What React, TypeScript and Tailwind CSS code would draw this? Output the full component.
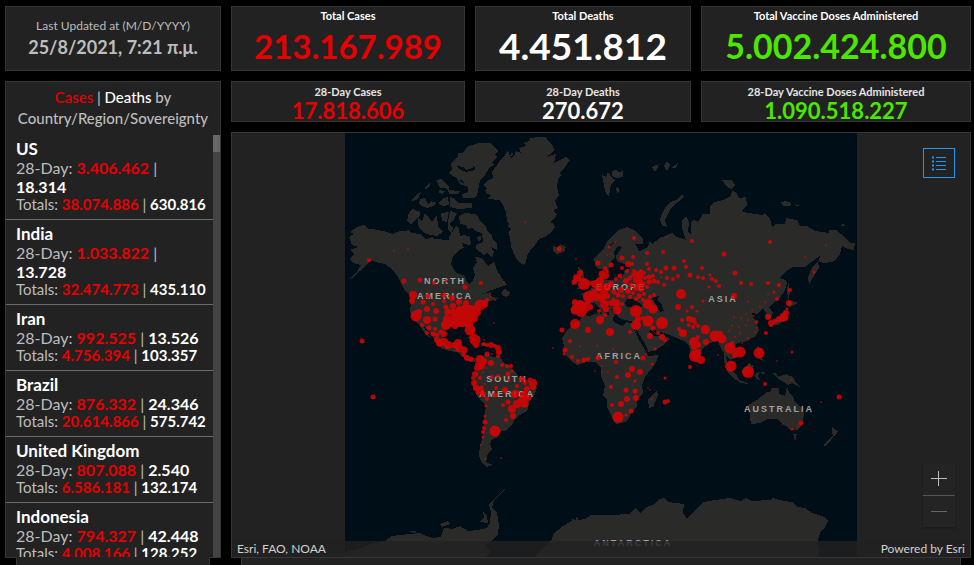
import React from "react";

interface CountryProps {
  name: string;
  cases: string;
  deaths: string;
  totalCases: string;
  totalDeaths: string;
}

const countries: CountryProps[] = [
  { name: "US", cases: "3.406.462", deaths: "18.314", totalCases: "38.074.886", totalDeaths: "630.816" },
  { name: "India", cases: "1.033.822", deaths: "13.728", totalCases: "32.474.773", totalDeaths: "435.110" },
  { name: "Iran", cases: "992.525", deaths: "13.526", totalCases: "4.756.394", totalDeaths: "103.357" },
  { name: "Brazil", cases: "876.332", deaths: "24.346", totalCases: "20.614.866", totalDeaths: "575.742" },
  { name: "United Kingdom", cases: "807.088", deaths: "2.540", totalCases: "6.586.181", totalDeaths: "132.174" },
  { name: "Indonesia", cases: "794.327", deaths: "42.448", totalCases: "4.008.166", totalDeaths: "128.252" },
];

// Web mercator outlines
const land = [
  // Greenland
  "499,162 505,155 508,150 510,156 512,152 514,156 516,151 521,153 519,148 526,146 523,143 530,141 528,139 537,137 546,137 549,142 553,145 554,150 552,153 546,157 556,154 554,163 560,160 566,157 570,160 565,167 560,172 561,175 558,180 557,187 559,195 555,201 558,208 553,211 557,214 555,218 550,222 554,224 555,227 552,232 545,237 540,238 535,245 530,251 527,256 526,262 524,265 520,263 516,258 511,247 510,237 508,232 512,229 508,227 509,224 507,222 506,212 503,205 500,200 488,199 491,195 487,194 485,190 487,188 483,185 487,181 493,178 492,172 497,165",
  // Ellesmere
  "449,172 452,170 451,164 453,161 458,157 458,153 463,153 467,147 478,143 490,143 499,151 495,154 497,157 492,162 494,165 489,168 485,175 480,180 479,186 477,195 474,198 463,198 462,194 468,192 468,187 460,184 456,177 452,176",
  // Baffin
  "459,216 465,213 475,214 478,217 480,221 486,227 488,232 492,236 493,240 497,244 497,250 491,247 494,252 492,257 487,253 484,255 476,249 476,245 483,242 482,233 475,231 472,228 468,229 466,225 460,224",
  "477,237 481,236 481,240 478,241",
  // Arctic islands
  "418,218 422,221 425,213 429,218 432,222 437,215 438,227 443,232 437,236 430,235 423,232 420,229 418,225",
  "409,212 413,209 420,212 420,215 416,219 411,224 407,221",
  "420,199 425,198 428,204 431,201 436,203 433,206 427,208 422,206 419,204",
  "411,200 416,195 421,192 418,199 413,201",
  "441,213 449,212 447,222 442,221",
  "450,211 457,213 454,219 449,224 453,227 452,233 448,230 448,222",
  "450,197 455,199 458,203 472,203 472,208 458,209 450,207",
  "443,198 448,197 449,205 443,206 438,203",
  "436,180 441,179 449,187 450,193 446,188 440,188",
  "425,187 430,183 430,185 426,190", "439,190 445,191 443,194 439,193", "448,190 460,191 458,194 449,194",
  // North America
  "349,237 354,234 350,232 357,227 364,225 368,229 372,229 383,231 393,234 400,231 406,231 408,229 411,233 420,234 426,239 432,237 434,239 449,240 449,237 453,231 456,226 459,229 460,236 464,235 470,237 471,244 463,248 458,251 453,256 451,264 456,273 465,276 466,280 469,284 473,281 475,274 473,268 477,262 475,257 482,258 488,266 494,262 497,270 503,280 507,285 500,287 494,289 482,294 491,292 491,297 499,298 488,302 482,305 477,314 473,318 472,323 475,330 474,335 471,333 468,327 462,327 455,326 448,328 443,334 444,343 449,347 455,343 460,341 458,348 464,351 466,359 475,358 481,359 479,362 470,362 463,357 457,352 449,351 441,348 436,342 432,335 424,327 428,334 431,338 426,335 420,326 415,321 410,312 411,303 410,296 404,289 398,277 393,270 385,264 372,261 368,263 360,271 352,278 349,279 358,270 361,265 353,263 350,258 355,254 350,250 358,247 352,245",
  "501,292 505,289 510,292 509,296 503,296",
  // Caribbean
  "466,337 471,336 478,341 473,340", "481,343 488,344 486,346 481,346",
  // South America
  "480,357 488,354 493,357 500,357 504,363 509,366 517,374 520,379 526,380 533,382 537,388 535,394 529,402 528,410 520,415 516,418 513,423 506,431 501,431 498,437 492,439 490,444 492,449 488,453 487,458 486,462 493,465 486,467 481,462 479,455 480,445 483,437 484,420 486,405 478,398 473,387 474,378 479,368",
  // Africa
  "581,318 583,315 590,316 598,313 606,315 613,315 613,321 618,324 623,326 626,322 637,325 634,330 640,341 645,350 648,356 659,355 655,364 645,377 642,385 643,393 637,400 637,407 631,412 629,419 625,422 617,424 614,422 611,415 607,407 607,400 603,396 605,386 601,376 601,368 596,362 587,362 577,365 570,360 563,352 564,346 562,338 567,330 572,325 578,321",
  "657,390 658,395 653,407 649,408 648,400 652,395",
  // Scandinavia
  "595,266 594,258 600,253 604,248 607,242 612,236 618,230 627,227 634,230 643,238 643,244 635,244 640,252 636,264 624,264 617,261 616,256 622,247 618,246 614,252 615,257 612,260 608,272 604,268 599,269",
  // Eurasia
  "573,301 580,301 586,302 584,296 580,294 587,292 592,288 597,284 600,280 600,273 604,272 606,280 615,280 622,278 625,270 631,268 627,266 632,262 634,252 638,254 640,251 648,247 650,241 652,244 660,238 672,233 677,237 686,240 682,229 682,221 686,216 689,222 688,232 691,235 691,222 694,220 698,222 702,216 702,214 710,214 710,206 715,202 723,200 731,196 732,191 736,192 739,198 746,197 747,205 741,211 748,213 762,215 765,213 770,219 772,227 775,224 785,224 786,218 797,220 800,226 807,226 815,231 829,233 829,230 836,230 845,237 850,243 855,243 854,250 848,249 842,246 840,254 835,261 825,263 818,262 819,268 812,279 809,285 808,277 812,268 819,260 820,256 810,263 805,267 793,267 786,271 779,278 786,280 787,284 784,292 778,300 773,303 769,307 773,313 771,318 767,319 766,313 763,308 757,314 752,313 754,319 759,321 757,325 759,330 756,336 747,341 738,343 734,346 738,352 735,358 730,360 726,355 727,362 731,368 733,373 729,369 724,362 724,353 721,348 718,341 710,343 702,349 699,360 696,363 692,358 689,346 684,341 672,336 663,333 655,330 652,329 656,334 661,335 663,333 665,337 670,338 665,344 656,350 648,352 643,345 637,335 634,328 634,322 622,319 617,316 615,309 611,309 615,316 611,318 607,309 600,300 597,299 604,308 608,311 603,316 600,309 594,303 588,304 586,308 582,313 576,314 571,311",
  // British isles, Iceland, Svalbard
  "578,267 583,270 584,278 590,284 588,288 577,289 581,283 577,279 580,274", "573,280 578,278 577,284 572,285",
  "553,246 557,247 560,244 566,247 564,252 557,254 553,251",
  "602,175 606,177 608,172 612,178 615,181 611,184 610,190 609,196 606,194 604,186",
  "612,171 616,170 618,172 623,171 623,177 616,178 612,176", "616,188 618,187 620,191 617,193",
  "652,167 659,164 657,169 655,172", "664,166 667,161 670,165 667,171", "671,168 678,163 676,168",
  // Novaya Zemlya and the Siberian islands
  "682,195 684,197 678,202 671,208 668,214 665,220 667,227 662,225 660,220 662,214 665,208 670,202 676,200",
  "722,180 732,180 735,185 731,189 727,187", "781,202 786,201 791,203 791,206 783,206", "795,204 800,206 796,206", "840,226 843,224 845,226",
  // East Asian islands
  "788,282 790,290 789,301 787,292", "786,304 790,300 798,303 790,307", "785,310 788,319 778,325 770,325 780,318",
  "757,345 761,350 760,355 764,361 759,359", "742,370 749,363 754,366 751,375 744,376",
  "724,365 732,371 737,376 740,381 736,380 728,373", "737,380 743,381 749,384 741,383", "755,374 760,372 758,376 760,380 756,379",
  "760,372 768,373 762,374",
  "772,373 776,373 778,377 786,374 793,377 796,383 800,387 792,383 788,385 784,382 778,379",
  // Oceania
  "748,405 757,400 762,396 766,392 770,392 773,388 779,388 779,394 785,396 787,387 790,394 793,396 795,402 801,408 804,414 803,420 801,426 797,430 791,430 786,426 783,424 777,419 768,419 760,423 751,424 750,415",
  "793,434 797,434 795,439", "832,426 835,430 838,431 836,435 832,434", "835,434 831,440 825,446 823,445 829,439",
  // Antarctica
  "345,557 345,552 362,548 374,543 385,541 392,536 400,535 420,533 424,535 432,538 441,537 444,528 453,529 460,526 468,531 478,530 487,528 490,523 491,512 489,505 494,499 505,489 501,494 494,500 492,508 497,513 499,525 498,534 494,539 485,545 490,552 486,557",
  "483,511 487,516 488,523 480,522 484,517", "440,524 448,521 450,524 442,527", "408,531 416,531 414,533",
  "535,557 545,546 552,540 553,534 563,526 572,521 573,518 575,521 577,516 578,520 585,519 591,515 610,515 630,514 635,508 640,513 646,507 655,504 659,499 664,498 668,502 684,504 683,513 687,519 692,513 704,502 715,500 730,498 741,501 746,498 752,501 770,500 773,498 784,501 792,502 797,507 805,508 812,513 824,517 828,521 825,527 821,531 818,540 819,557",
];

const water = [
  "625,303 627,299 631,299 635,300 643,306 638,308 627,307",
  "652,298 659,296 657,300 662,305 664,311 660,312 657,306",
  "648,331 651,330 655,334 662,333 660,336 654,336",
  "635,328 638,332 645,344 648,350 645,350 638,338",
  "457,166 463,167 466,170 473,168 474,164 475,170 466,172 460,170",
  "459,181 466,174 461,180 466,184", "461,280 464,283 460,282",
  "608,246 614,242 612,245", "509,156 514,155 511,158",
  "462,243 466,244 470,247 464,248",
];

// x, y, radius
const outbreaks = [
  // Alaska, Canada, Pacific
  [369, 260, 2], [394, 251, 1], [408, 249, 1], [404, 281, 2.5], [420, 280, 2.5], [434, 283, 2], [446, 281, 1.5], [465, 287, 2.5], [481, 283, 2], [504, 282, 1], [525, 222, 1], [362, 341, 2.5], [373, 397, 2.5], [494, 323, 1], [506, 296, 1],
  // United States
  [413, 295, 4], [412, 301, 3], [428, 296, 2.5], [444, 295, 2.5], [452, 298, 3], [423, 302, 2.5], [433, 304, 2], [444, 301, 2], [459, 302, 3], [466, 303, 3], [416, 316, 5.5], [419, 312, 3], [427, 309, 3], [436, 311, 3], [427, 320, 4], [435, 319, 2.5], [429, 328, 2.5], [422, 325, 2], [435, 329, 2], [446, 307, 2.5], [453, 306, 3], [448, 312, 3.5], [454, 312, 3.5], [460, 310, 4], [466, 309, 5], [471, 310, 5], [447, 319, 4], [453, 319, 4], [459, 318, 5], [466, 317, 6], [472, 314, 6], [446, 325, 5], [455, 325, 4], [461, 323, 4], [468, 321, 6], [473, 318, 5], [450, 322, 4], [457, 314, 4], [463, 314, 5], [476, 313, 4], [470, 330, 5.5], [475, 340, 5.5], [476, 345, 3], [480, 305, 5.5], [484, 304, 4], [477, 309, 4], [487, 300, 2], [479, 313, 2], [491, 297, 1], [495, 300, 1],
  // Mexico and Central America
  [427, 333, 2], [433, 334, 2.5], [437, 335, 2], [441, 332, 2.5], [444, 334, 3], [437, 340, 3], [440, 343, 4], [444, 342, 4], [448, 345, 4], [454, 345, 3], [458, 343, 4], [459, 348, 4], [464, 350, 3.5], [467, 358, 3], [471, 359, 2.5], [464, 355, 2], [484, 344, 2], [487, 345, 2], [491, 345, 3], [495, 346, 2], [498, 348, 3], [499, 352, 3], [498, 356, 2], [484, 340, 1], [473, 336, 3], [487, 354, 2.5], [492, 354, 1],
  // South America
  [480, 359, 4], [480, 365, 5], [477, 368, 3], [484, 361, 3], [486, 368, 1], [491, 363, 3], [483, 372, 1], [475, 374, 3], [473, 378, 2], [474, 383, 3], [476, 388, 3], [480, 378, 2], [478, 393, 2], [482, 386, 1], [485, 384, 1], [502, 365, 2], [507, 366, 2], [511, 366, 2], [512, 371, 1.5], [508, 374, 2.5], [492, 377, 2], [498, 376, 2], [522, 379, 3], [525, 383, 2], [530, 380, 2.5], [533, 383, 4], [533, 387, 3], [517, 386, 2], [505, 390, 3], [496, 388, 2], [509, 380, 1.5], [518, 392, 1.5], [527, 389, 3], [515, 394, 4], [524, 395, 4], [528, 398, 3], [522, 402, 5], [517, 404, 4], [525, 404, 3.5], [512, 409, 4], [513, 416, 3], [508, 402, 2.5], [503, 405, 2], [506, 420, 2], [495, 431, 5.5], [495, 395, 2.5], [480, 390, 4], [483, 394, 3], [487, 399, 2], [486, 406, 1.5], [485, 416, 1.5], [485, 422, 2.5], [484, 428, 2], [483, 432, 2], [483, 437, 1.5], [481, 445, 1], [485, 459, 1], [501, 458, 1],
  // Western Europe
  [559, 249, 2.5], [576, 259, 1], [580, 273, 3], [577, 278, 4], [574, 282, 2.5], [584, 284, 6], [591, 283, 2], [589, 297, 6], [595, 284, 4], [600, 281, 4], [602, 274, 3.5], [606, 276, 3], [598, 263, 2.5], [611, 265, 2.5], [605, 269, 2.5], [607, 272, 2], [609, 247, 1.5], [615, 242, 1], [607, 255, 1], [611, 254, 1], [575, 302, 3], [575, 310, 4.5], [580, 306, 6], [581, 311, 6], [586, 307, 5], [590, 307, 3], [594, 292, 3], [597, 297, 4], [601, 298, 4], [604, 292, 4], [607, 296, 3], [607, 287, 4], [602, 288, 3], [598, 289, 3], [611, 284, 3], [604, 304, 4], [606, 309, 3], [599, 311, 2], [605, 315, 2], [612, 303, 3], [616, 303, 4], [617, 310, 4.5], [618, 295, 2.5], [614, 292, 2.5], [621, 290, 3], [622, 304, 2], [613, 299, 1.5], [609, 303, 2],
  // Eastern Europe and Russia
  [634, 238, 2], [667, 237, 1], [692, 241, 2], [663, 252, 2], [647, 253, 2], [633, 257, 2], [622, 258, 2.5], [628, 264, 3], [632, 264, 2], [647, 264, 2], [649, 269, 2], [627, 271, 2], [622, 268, 2], [633, 275, 2], [620, 276, 2.5], [616, 279, 2], [638, 276, 5], [641, 271, 2], [636, 280, 3], [644, 273, 2], [649, 277, 2.5], [653, 276, 2], [661, 272, 2], [656, 270, 2], [666, 268, 2.5], [674, 268, 2.5], [684, 261, 2], [686, 267, 2], [690, 275, 2.5], [678, 276, 2], [667, 278, 2], [673, 279, 2], [661, 277, 1], [654, 281, 2.5], [658, 282, 2], [664, 285, 2], [649, 282, 2.5], [643, 284, 2.5], [647, 287, 2], [626, 281, 3], [631, 285, 2.5], [636, 288, 3], [641, 289, 3], [628, 291, 3], [633, 293, 2], [639, 296, 2.5], [644, 294, 2], [650, 297, 2], [654, 295, 2], [623, 296, 2], [630, 297, 2], [636, 299, 2], [643, 300, 2], [630, 278, 2.5], [640, 281, 3], [645, 278, 2], [634, 271, 2], [638, 285, 2.5], [703, 278, 2], [702, 268, 2], [681, 294, 5], [724, 254, 2.5], [770, 242, 2], [735, 273, 2.5], [805, 257, 1], [814, 272, 1.5], [826, 245, 1],
  // Middle East and Asia
  [636, 311, 6], [648, 304, 5], [653, 309, 4.5], [648, 321, 5.5], [662, 323, 6], [636, 325, 5], [638, 319, 3], [643, 318, 2], [653, 328, 2.5], [658, 333, 2], [662, 337, 3], [665, 340, 2], [650, 336, 3], [655, 349, 1.5], [678, 307, 3], [687, 311, 1.5], [692, 307, 2], [682, 320, 2], [689, 319, 3], [693, 320, 3], [695, 323, 2], [689, 325, 2], [679, 329, 2], [683, 333, 4], [693, 327, 2], [698, 326, 2], [705, 329, 4], [706, 330, 4], [694, 342, 5], [694, 347, 3], [698, 345, 3], [695, 356, 6], [698, 352, 3], [701, 360, 4], [690, 367, 2], [706, 342, 3], [715, 336, 5.5], [720, 334, 3], [718, 338, 3], [722, 339, 4.5], [705, 330, 4], [698, 337, 2], [703, 301, 1.5], [697, 311, 1.5], [712, 279, 2], [710, 275, 1.5], [716, 281, 2], [719, 286, 2], [709, 287, 1.5], [698, 277, 2], [741, 283, 2], [751, 284, 2], [768, 283, 2], [779, 285, 2], [790, 290, 2], [789, 303, 3], [734, 296, 3], [774, 292, 1.5], [777, 299, 2], [768, 294, 1], [765, 302, 1],
  [748, 302, 1], [752, 310, 1], [760, 307, 1], [746, 314, 1], [741, 318, 1], [734, 317, 1], [746, 325, 1], [739, 327, 1], [732, 326, 1], [754, 316, 1], [756, 322, 1.5], [757, 328, 1], [748, 320, 1], [740, 333, 1], [729, 331, 1], [748, 338, 1], [742, 343, 1], [755, 332, 1], [735, 337, 1],
  [768, 317, 3], [771, 323, 3], [775, 321, 2.5], [779, 319, 3], [784, 317, 4.5], [786, 313, 3], [787, 309, 1.5], [771, 325, 2], [766, 333, 2], [730, 348, 5.5], [740, 352, 5.5], [735, 355, 3], [732, 343, 2], [759, 353, 5.5], [731, 366, 5.5], [748, 372, 6], [765, 384, 2], [749, 365, 1], [777, 361, 1], [792, 352, 1.5], [718, 355, 1],
  // Africa
  [562, 330, 2.5], [575, 324, 5], [588, 330, 3], [600, 320, 4], [610, 332, 4], [630, 332, 2], [553, 348, 1], [570, 341, 2], [565, 350, 2.5], [564, 354, 1.5], [572, 357, 2], [578, 361, 2], [584, 360, 2.5], [588, 359, 2], [598, 358, 2.5], [580, 346, 1], [597, 346, 1], [613, 349, 1], [616, 362, 2], [629, 353, 1], [643, 358, 2.5], [632, 369, 3], [640, 372, 3], [628, 375, 3], [617, 377, 2], [635, 381, 1.5], [611, 387, 2], [626, 390, 2.5], [635, 391, 2.5], [627, 399, 3], [636, 398, 3], [621, 404, 3], [612, 405, 2], [631, 411, 2.5], [618, 417, 5.5], [626, 415, 1.5], [602, 372, 1], [608, 372, 1], [602, 366, 1], [595, 371, 1], [652, 364, 1.5], [646, 354, 1], [665, 378, 1.5], [648, 388, 1], [650, 390, 1], [665, 402, 2.5], [668, 401, 2], [652, 399, 1],
  // Oceania
  [751, 420, 1], [783, 424, 1], [792, 429, 1.5], [801, 423, 2.5], [798, 426, 1], [803, 412, 1], [791, 380, 1], [821, 402, 1], [839, 397, 2.5], [795, 439, 1], [834, 435, 1], [772, 389, 1],
];

const regions = [
  { name: "NORTH", x: 445, y: 284 },
  { name: "AMERICA", x: 445, y: 299 },
  { name: "SOUTH", x: 507, y: 382 },
  { name: "AMERICA", x: 507, y: 397 },
  { name: "EUROPE", x: 621, y: 290 },
  { name: "AFRICA", x: 619, y: 359 },
  { name: "ASIA", x: 723, y: 302 },
  { name: "AUSTRALIA", x: 779, y: 412 },
  { name: "ANTARCTICA", x: 633, y: 546 },
];

const panel = "border border-[#363636] bg-[#222222]";

function Country({ data }: { data: CountryProps }) {
  return (
    <li className="border-b border-[#6a6a6a] pt-1 pb-[6px] pl-[10px] pr-1 text-[#bdbdbd]">
      <div className="text-[17px] leading-[19px] font-bold text-white">{data.name}</div>
      <div className="text-base leading-[19px]">
        28-Day: <strong className="text-[#e60000]">{data.cases}</strong> |{" "}
        <strong className="text-white">{data.deaths}</strong>
      </div>
      <div className="text-[15px] leading-[17px]">
        Totals: <strong className="text-[#e60000]">{data.totalCases}</strong> |{" "}
        <strong className="text-white">{data.totalDeaths}</strong>
      </div>
    </li>
  );
}

function WorldMap() {
  return (
    <svg
      className="h-full w-full max-w-[512px] bg-[#000e18]"
      viewBox="345 133 512 424"
      preserveAspectRatio="xMidYMin slice"
      role="img"
      aria-label="World map"
    >
      <g fill="#2a2a28" shapeRendering="crispEdges">
        {land.map((points) => (
          <polygon key={points} points={points} />
        ))}
      </g>
      <g fill="#000e18" shapeRendering="crispEdges">
        {water.map((points) => (
          <polygon key={points} points={points} />
        ))}
      </g>
      <g fill="#a0a0a0" textAnchor="middle" className="font-['Liberation_Sans'] text-[9px] font-bold tracking-[2px]">
        {regions.map((region) => (
          <text key={region.name + region.y} x={region.x} y={region.y}>
            {region.name}
          </text>
        ))}
      </g>
      <g fill="#e60000" opacity="0.82">
        {outbreaks.map(([x, y, r], index) => (
          <circle key={index} cx={x} cy={y} r={r} opacity={r === 1 ? 0.7 : 1} />
        ))}
      </g>
    </svg>
  );
}

function App() {
  return (
    <div className="flex h-screen flex-col overflow-hidden bg-black pl-[5px] pr-[3px] pt-[6px] font-[Lato,sans-serif]">
      <div className="flex min-h-0 flex-1 gap-[10px]">
        <aside className="flex w-[216px] shrink-0 flex-col gap-[10px]">
          <section className={`${panel} h-[65px] pt-[9px] text-center text-[#bdbdbd]`}>
            <div className="text-xs leading-[20px]">Last Updated at (M/D/YYYY)</div>
            <div className="text-lg leading-[22px] font-bold">25/8/2021, 7:21 π.μ.</div>
          </section>
          <section className={`${panel} flex min-h-0 flex-1 flex-col`}>
            <h2 className="pt-[5px] pb-[6px] text-center text-[15px] leading-[21px] font-medium text-[#bdbdbd]">
              <span className="text-[#e60000]">Cases</span> | <span className="text-white">Deaths</span> by
              <br />
              Country/Region/Sovereignty
            </h2>
            <div className="flex min-h-0 flex-1">
              <ul className="min-w-0 flex-1 overflow-hidden">
                {countries.map((data) => (
                  <Country key={data.name} data={data} />
                ))}
              </ul>
              <div className="w-[7px] bg-[#434343]">
                <div className="h-[17px] bg-[#666666]" />
              </div>
            </div>
          </section>
        </aside>

        <main className="flex min-w-0 flex-1 flex-col gap-[10px]">
          <div className="grid grid-cols-[234fr_216fr_270fr] gap-[10px] text-center font-bold">
            <section className={`${panel} h-[65px] text-[#e60000]`}>
              <h2 className="text-[11px] leading-[18px] text-white">Total Cases</h2>
              <div className="text-[33px] leading-[42px]">213.167.989</div>
            </section>
            <section className={`${panel} h-[65px] text-white`}>
              <h2 className="text-[11px] leading-[18px]">Total Deaths</h2>
              <div className="text-[37px] leading-[42px]">4.451.812</div>
            </section>
            <section className={`${panel} h-[65px] text-[#4ce600]`}>
              <h2 className="text-[11px] leading-[18px] text-white">Total Vaccine Doses Administered</h2>
              <div className="text-[34px] leading-[42px]">5.002.424.800</div>
            </section>
            <section className={`${panel} h-[41px] text-[#e60000]`}>
              <h2 className="text-[11px] leading-[20px] text-[#e6e6e6]">28-Day Cases</h2>
              <div className="text-[22px] leading-[18px]">17.818.606</div>
            </section>
            <section className={`${panel} h-[41px] text-white`}>
              <h2 className="text-[11px] leading-[20px] text-[#e6e6e6]">28-Day Deaths</h2>
              <div className="text-[22px] leading-[18px]">270.672</div>
            </section>
            <section className={`${panel} h-[41px] text-[#4ce600]`}>
              <h2 className="text-[11px] leading-[20px] text-[#e6e6e6]">28-Day Vaccine Doses Administered</h2>
              <div className="text-[22px] leading-[18px]">1.090.518.227</div>
            </section>
          </div>

          <section className={`${panel} relative flex min-h-0 flex-1 justify-center`}>
            <WorldMap />
            <button
              aria-label="Legend"
              className="absolute top-[15px] right-[15px] flex h-[30px] w-8 items-center justify-center border border-[#2196f3] bg-[#222222]"
            >
              <svg width="16" height="16" viewBox="0 0 16 16" fill="none" stroke="#2196f3">
                <path d="M5 2.5h10M5 6.5h10M5 10.5h10M5 14.5h10" />
                <path d="M1 1.5h2v2H1zM1 5.5h2v2H1zM1 9.5h2v2H1zM1 13.5h2v2H1z" fill="#2196f3" stroke="none" />
              </svg>
            </button>
            <div className="absolute right-[15px] bottom-[30px] flex w-8 flex-col bg-[#242424] shadow-[0_1px_2px_rgba(0,0,0,0.3)]">
              <button aria-label="Zoom in" className="flex h-8 items-center justify-center">
                <svg width="16" height="16" viewBox="0 0 16 16" stroke="#bdbdbd">
                  <path d="M0 7.5h16M7.5 0v15" />
                </svg>
              </button>
              <button aria-label="Zoom out" className="flex h-8 items-center justify-center border-t border-[#555555]">
                <svg width="16" height="16" viewBox="0 0 16 16" stroke="#666666">
                  <path d="M0 7.5h16" />
                </svg>
              </button>
            </div>
            <div className="absolute inset-x-0 bottom-0 flex h-4 justify-between bg-[#222222]/80 px-[5px] text-xs leading-4 text-[#d0d0d0]">
              <span>Esri, FAO, NOAA</span>
              <span>Powered by Esri</span>
            </div>
          </section>
        </main>
      </div>

      {/* top edge of the tab bars */}
      <div className="-mt-px flex h-2 shrink-0 gap-[10px]">
        <div className="w-[216px] shrink-0 px-[11px]">
          <div className="h-full border-x border-[#363636] bg-[#222222]" />
        </div>
        <div className="flex-1 px-[10px]">
          <div className="h-full border-x border-[#363636] bg-[#222222]" />
        </div>
      </div>
    </div>
  );
}

export default App;
